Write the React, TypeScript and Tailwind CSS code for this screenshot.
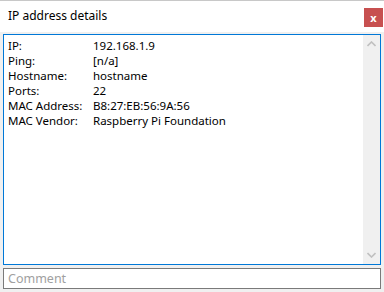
export default function App() {
  const rows: Array<[string, string]> = [
    ["IP:", "192.168.1.9"],
    ["Ping:", "[n/a]"],
    ["Hostname:", "hostname"],
    ["Ports:", "22"],
    ["MAC Address:", "B8:27:EB:56:9A:56"],
    ["MAC Vendor:", "Raspberry Pi Foundation"],
  ];

  return (
    <div
      className="flex h-[292px] w-[384px] flex-col overflow-hidden bg-[#f0f0f0] text-[11.5px] text-black"
      style={{ fontFamily: '"Noto Sans", "Open Sans", sans-serif' }}
    >
      <div className="h-px w-full bg-[#c8c8c8]" />
      {/* Title bar */}
      <div className="flex h-[31px] items-start justify-between bg-white">
        <div className="pl-[8px] pt-[5px] text-[12px] leading-[20px]">IP address details</div>
        <button className="mr-[1px] mt-[7px] flex h-[19px] w-[19px] items-center justify-center bg-[#c75050] text-[11px] font-bold leading-none text-white">
          x
        </button>
      </div>

      {/* Details box */}
      <div className="mx-[3px] mt-[2px] flex h-[231px] border border-[#0078d7] bg-white">
        <div className="flex-1 pl-[4px] pt-[3px]">
          {rows.map(([k, v]) => (
            <div key={k} className="flex h-[15px] items-center leading-[15px]">
              <span className="w-[85px] shrink-0">{k}</span>
              <span>{v}</span>
            </div>
          ))}
        </div>
        <div className="flex w-[17px] flex-col items-center justify-between bg-[#f0f0f0] py-[6px]">
          <svg width="9" height="6" viewBox="0 0 9 6">
            <path d="M0.5 5 L4.5 1 L8.5 5" fill="none" stroke="#c0c0c0" strokeWidth="1.6" />
          </svg>
          <svg width="9" height="6" viewBox="0 0 9 6">
            <path d="M0.5 1 L4.5 5 L8.5 1" fill="none" stroke="#c0c0c0" strokeWidth="1.6" />
          </svg>
        </div>
      </div>

      {/* Comment */}
      <div className="mx-[3px] mt-[3px] flex h-[21px] items-center border border-[#7a7a7a] bg-white pl-[4px] text-[12.5px] leading-[16px] text-[#a0a0a0]">
        Comment
      </div>
    </div>
  );
}
